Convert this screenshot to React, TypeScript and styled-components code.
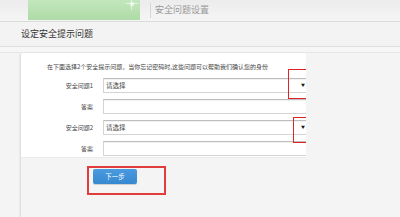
import React from "react";
import styled, { createGlobalStyle } from "styled-components";

const Global = createGlobalStyle`
  html, body { margin: 0; padding: 0; }
  body {
    background: #f4f4f4;
    font-family: "Noto Sans CJK SC", "Noto Sans", sans-serif;
    width: 400px;
    height: 217px;
    overflow: hidden;
  }
`;

const Page = styled.div`
  width: 400px;
  height: 217px;
  display: flex;
  flex-direction: column;
  background: #f4f4f4;
`;

const Header = styled.div`
  height: 22px;
  box-sizing: border-box;
  border-bottom: 1px solid #dcdcdc;
  background: linear-gradient(#ececec, #f5f5f5);
  display: flex;
  align-items: flex-start;
`;

const Banner = styled.div`
  position: relative;
  margin-left: 28px;
  width: 112px;
  height: 20px;
  background: linear-gradient(#c3e7bd, #addba6);
`;

const Sparkle = styled.div`
  position: absolute;
  left: 98px;
  top: -2px;
  width: 12px;
  height: 12px;
  background:
    radial-gradient(circle, rgba(255,255,255,0.9) 0 0.5px, rgba(255,255,255,0) 3px),
    linear-gradient(90deg, transparent 5.5px, rgba(255,255,255,0.55) 5.5px 6.5px, transparent 6.5px),
    linear-gradient(transparent 5.5px, rgba(255,255,255,0.55) 5.5px 6.5px, transparent 6.5px);
`;

const Sep = styled.div`
  width: 1px;
  height: 15px;
  margin: 3px 4px 0 10px;
  background: #d6d6d6;
`;

const HeaderTitle = styled.div`
  font-size: 9px;
  line-height: 22px;
  color: #9a9a9a;
  height: 21px;
  margin-top: -1px;
`;

const TitleBar = styled.div`
  height: 25px;
  box-sizing: border-box;
  border-bottom: 1px solid #dedede;
  padding-left: 21px;
  font-size: 9px;
  line-height: 24px;
  color: #333;
  background: #f3f3f3;
`;

const Divider = styled.div`
  height: 6px;
  box-sizing: border-box;
  border-bottom: 1px solid #e6e6e6;
  background: #f6f6f6;
`;

const Panel = styled.div`
  position: relative;
  margin-left: 20px;
  width: 286px;
  flex: 1;
  box-sizing: border-box;
  border-left: 1px solid #e0e0e0;
  border-top-left-radius: 3px;
  box-shadow: -1px 0 1px rgba(0,0,0,0.04);
  overflow: hidden;
`;

const FormBlock = styled.div`
  background: #fff;
  border-bottom: 1px solid #ececec;
  padding-bottom: 1px;
`;

const Intro = styled.div`
  height: 25px;
  box-sizing: border-box;
  padding: 9px 0 0 26px;
  font-size: 6px;
  line-height: 9px;
  color: #444;
  white-space: nowrap;
`;

const Rows = styled.div`
  display: flex;
  flex-direction: column;
  gap: 6px;
`;

const Row = styled.div`
  display: flex;
  align-items: center;
  height: 15px;
`;

const Label = styled.div`
  flex: none;
  width: 72px;
  margin-right: 10px;
  text-align: right;
  font-size: 6px;
  color: #444;
  white-space: nowrap;
`;

const Field = styled.div`
  position: relative;
  flex: none;
  width: 220px;
  height: 15px;
  box-sizing: border-box;
  border: 1px solid #d4d4d4;
  border-top-color: #bdbdbd;
  border-right: none;
  box-shadow: inset 0 1px 1px rgba(0,0,0,0.06);
  background: #fff;
  font-size: 6.5px;
  line-height: 13px;
  padding-left: 2px;
  color: #444;
`;

const Arrow = styled.span`
  position: absolute;
  left: 197px;
  top: 0;
  font-size: 4px;
  line-height: 13px;
  color: #111;
`;

const Footer = styled.div`
  padding: 8px 0 0 66px;
`;

const Mark = styled.div`
  width: 79px;
  height: 29px;
  box-sizing: border-box;
  border: 2px solid #e23c3c;
  padding: 1px 0 0 4px;
`;

const NextButton = styled.button`
  display: block;
  width: 44px;
  height: 15px;
  border: none;
  border-radius: 2px;
  padding: 0;
  background: linear-gradient(#4a9ae0, #3688d0);
  color: #fff;
  font-family: "Noto Sans CJK SC", sans-serif;
  font-size: 6.5px;
  line-height: 15px;
  box-shadow: 0 1px 0 rgba(0,0,0,0.15);
`;

const Bracket = styled.div<{ $left: number; $top: number; $h: number }>`
  position: absolute;
  left: ${(p) => p.$left}px;
  top: ${(p) => p.$top}px;
  width: 40px;
  height: ${(p) => p.$h}px;
  box-sizing: border-box;
  border: 1px solid #e02424;
  border-right: none;
`;

export default function App() {
  return (
    <Page>
      <Global />
      <Header>
        <Banner>
          <Sparkle />
        </Banner>
        <Sep />
        <HeaderTitle>安全问题设置</HeaderTitle>
      </Header>
      <TitleBar>设定安全提示问题</TitleBar>
      <Divider />
      <Panel>
        <FormBlock>
          <Intro>在下面选择2个安全提示问题，当你忘记密码时,这些问题可以帮助我们确认您的身份</Intro>
          <Rows>
            <Row>
              <Label>安全问题1</Label>
              <Field>
                请选择
                <Arrow>▼</Arrow>
              </Field>
            </Row>
            <Row>
              <Label>答案</Label>
              <Field />
            </Row>
            <Row>
              <Label>安全问题2</Label>
              <Field>
                请选择
                <Arrow>▼</Arrow>
              </Field>
            </Row>
            <Row>
              <Label>答案</Label>
              <Field />
            </Row>
          </Rows>
        </FormBlock>
        <Footer>
          <Mark>
            <NextButton>下一步</NextButton>
          </Mark>
        </Footer>
        <Bracket $left={267} $top={16} $h={30} />
        <Bracket $left={272} $top={64} $h={26} />
      </Panel>
    </Page>
  );
}
